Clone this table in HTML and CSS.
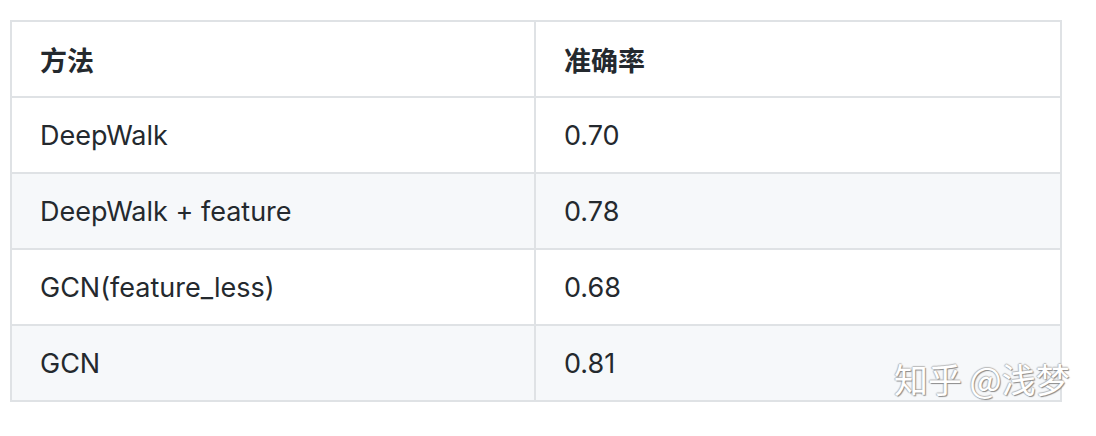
FILE: index.html
```html
<!DOCTYPE html>
<html lang="zh">
<head>
<meta charset="utf-8">
<link rel="stylesheet" href="styles.css">
</head>
<body>
<div class="page">
  <table class="results">
    <thead>
      <tr><th class="c1">方法</th><th class="c2">准确率</th></tr>
    </thead>
    <tbody>
      <tr><td>DeepWalk</td><td>0.70</td></tr>
      <tr><td>DeepWalk + feature</td><td>0.78</td></tr>
      <tr><td>GCN(feature_less)</td><td>0.68</td></tr>
      <tr><td>GCN</td><td>0.81</td></tr>
    </tbody>
  </table>
  <div class="watermark">知乎 @浅梦</div>
</div>
</body>
</html>
```

FILE: styles.css
```css
html, body {
  margin: 0;
  padding: 0;
  background: #ffffff;
}
.page {
  position: relative;
  width: 1096px;
  height: 436px;
  padding: 20px 0 0 10px;
  box-sizing: border-box;
  font-family: Inter, "Noto Sans CJK SC", sans-serif;
  color: #24292e;
}
.results {
  border-collapse: collapse;
  width: 1052px;
  table-layout: fixed;
  font-size: 27px;
}
.results th, .results td {
  border: 2px solid #dfe2e5;
  height: 76px;
  padding: 0 28px;
  text-align: left;
  vertical-align: middle;
  box-sizing: border-box;
  line-height: 1;
}
.results th {
  font-weight: 700;
  font-family: "Noto Sans CJK SC", sans-serif;
}
.results .c1 { width: 524px; }
.results tbody tr:nth-child(2n) { background: #f6f8fa; }
.watermark {
  position: absolute;
  left: 894px;
  top: 359px;
  font-family: "Noto Sans CJK SC", sans-serif;
  font-size: 34px;
  line-height: 1.2;
  color: #ffffff;
  text-shadow: 1px 1px 1px #8a8a8a, -1px 0 1px #bbbbbb, 0 -1px 1px #bbbbbb;
  white-space: nowrap;
}
```
